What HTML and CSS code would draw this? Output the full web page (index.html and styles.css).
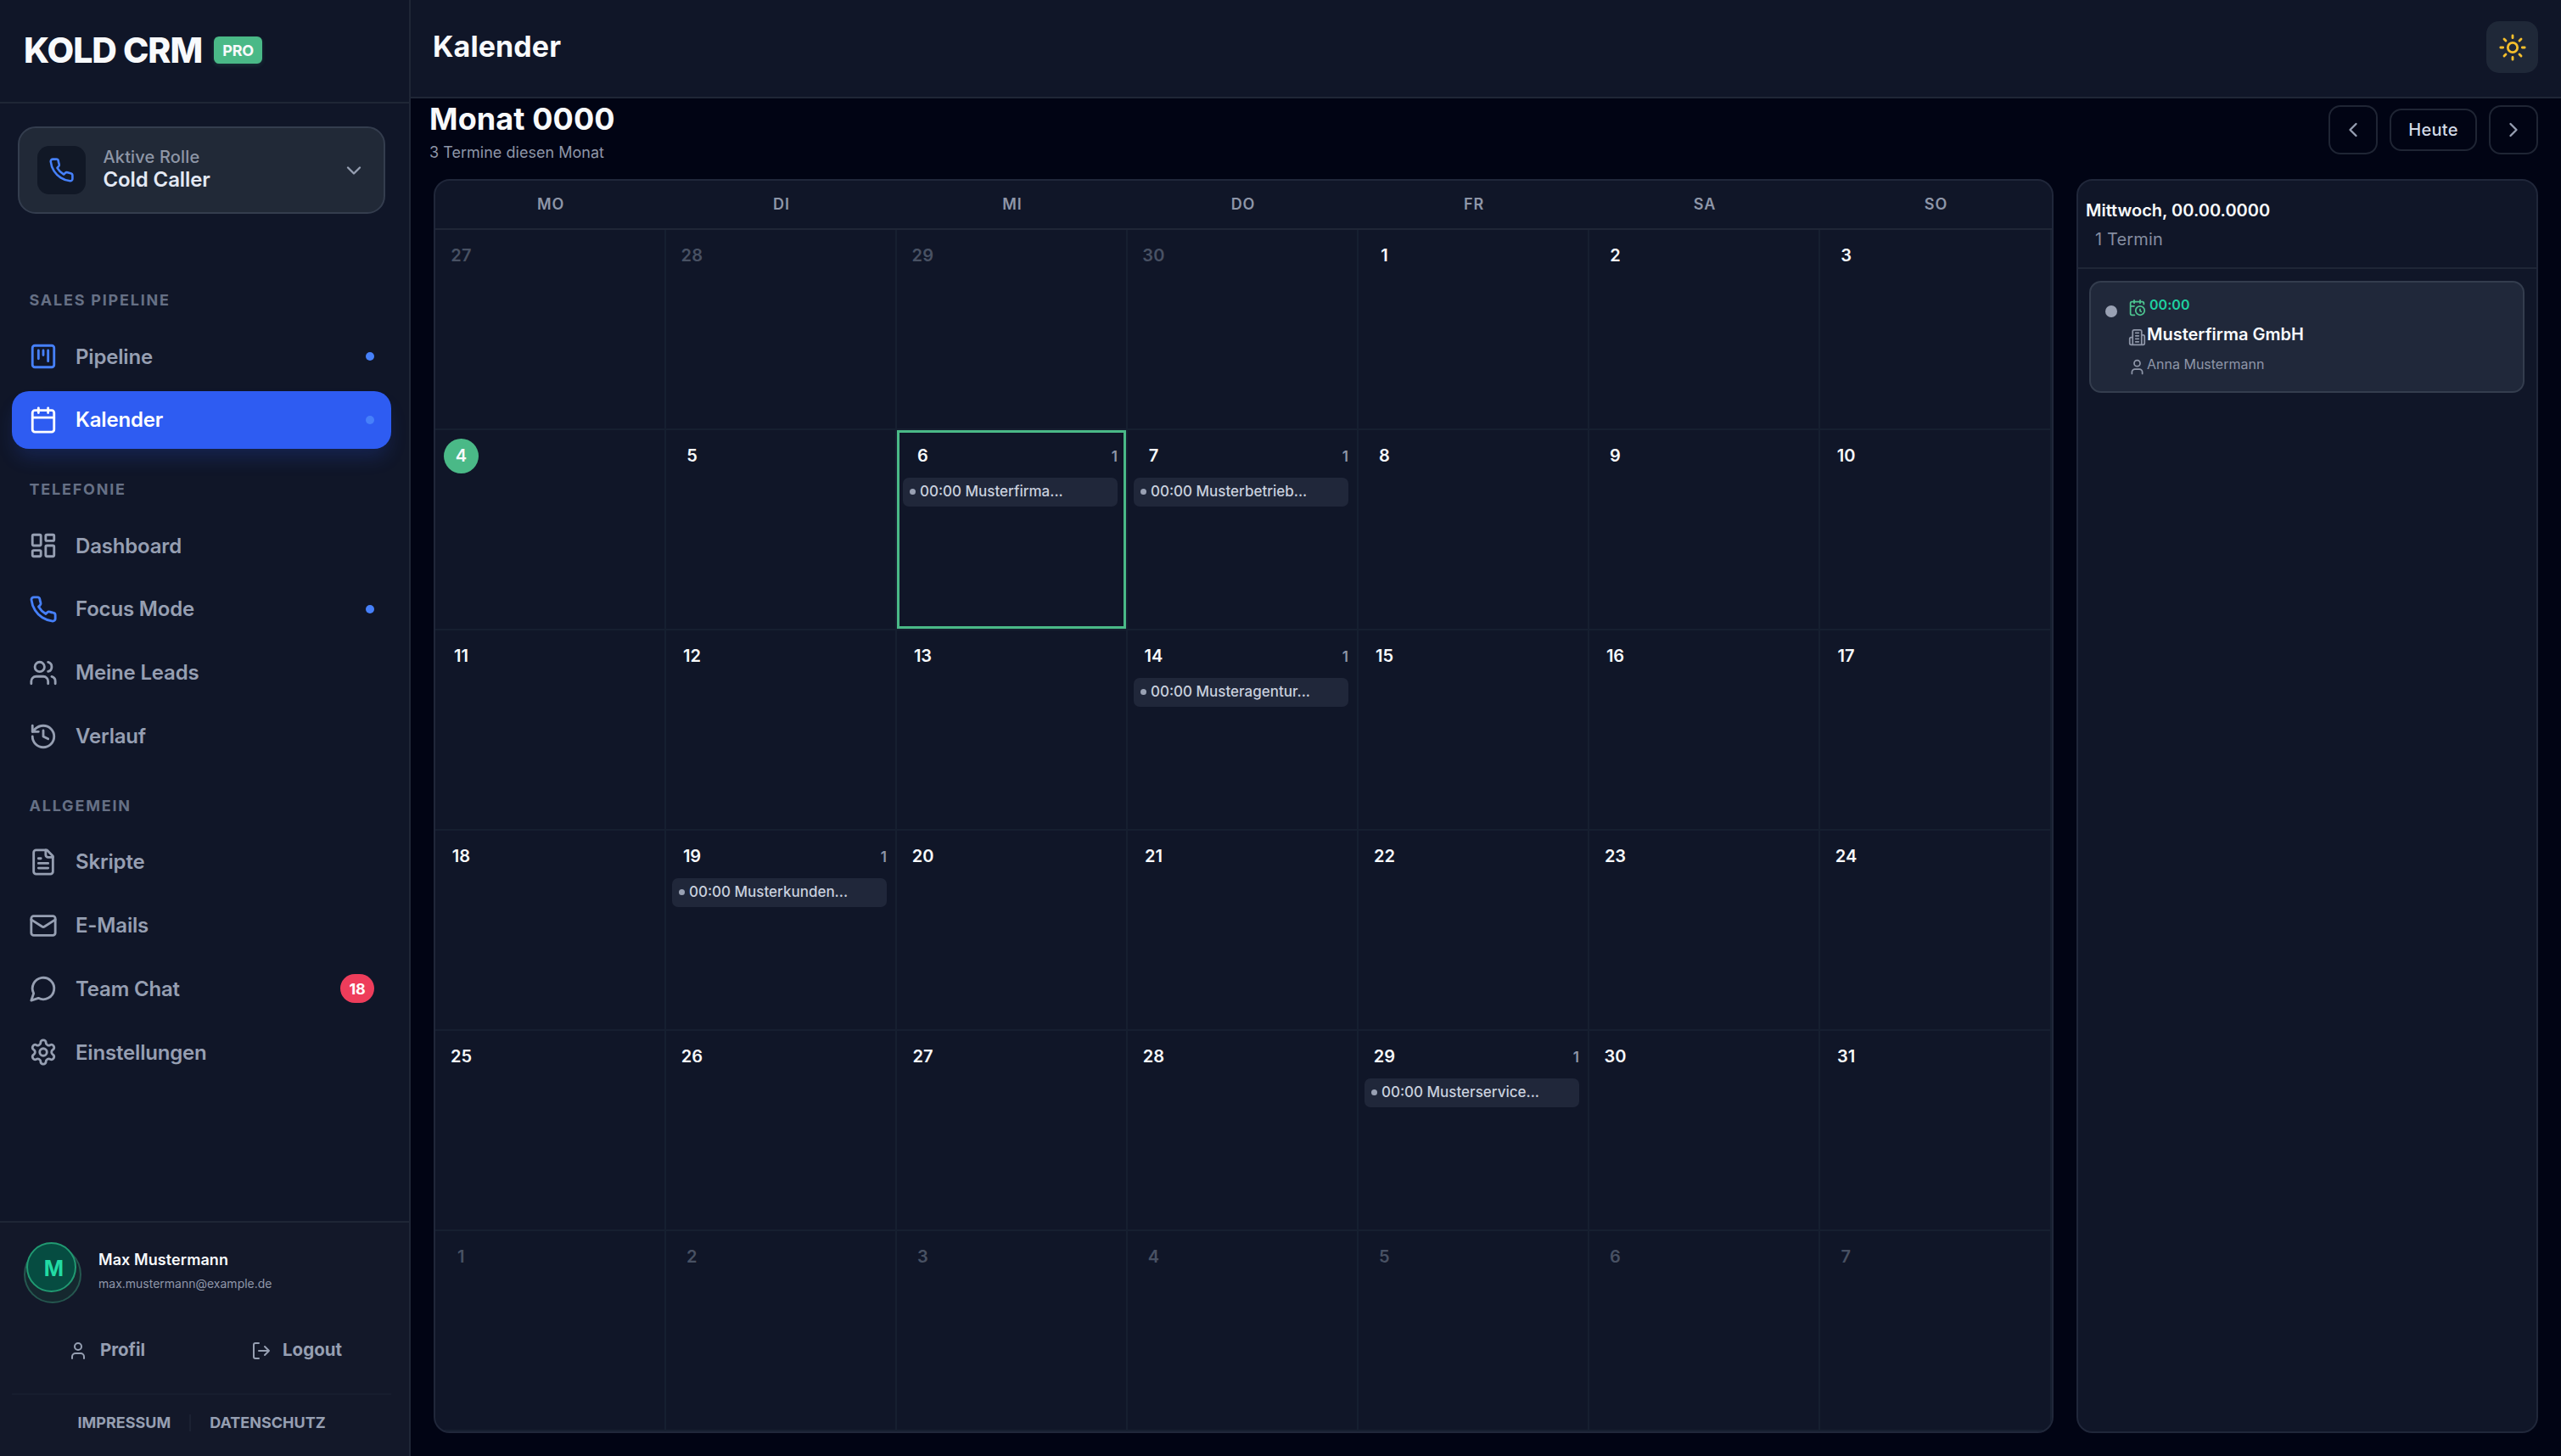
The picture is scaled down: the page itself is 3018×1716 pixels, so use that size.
FILE: index.html
```html
<!DOCTYPE html>
<html lang="de">
<head>
<meta charset="utf-8">
<title>Kalender – KOLD CRM</title>
<link rel="stylesheet" href="styles.css">
</head>
<body>
<svg class="sprite" aria-hidden="true">
  <symbol id="phone" viewBox="0 0 24 24"><path d="M22 16.92v3a2 2 0 0 1-2.18 2 19.79 19.79 0 0 1-8.63-3.07 19.5 19.5 0 0 1-6-6 19.79 19.79 0 0 1-3.07-8.67A2 2 0 0 1 4.11 2h3a2 2 0 0 1 2 1.72 12.84 12.84 0 0 0 .7 2.81 2 2 0 0 1-.45 2.11L8.09 9.91a16 16 0 0 0 6 6l1.27-1.27a2 2 0 0 1 2.11-.45 12.84 12.84 0 0 0 2.81.7A2 2 0 0 1 22 16.92z"/></symbol>
  <symbol id="chevron-down" viewBox="0 0 24 24"><path d="m6 9 6 6 6-6"/></symbol>
  <symbol id="chevron-left" viewBox="0 0 24 24"><path d="m15 18-6-6 6-6"/></symbol>
  <symbol id="chevron-right" viewBox="0 0 24 24"><path d="m9 18 6-6-6-6"/></symbol>
  <symbol id="kanban" viewBox="0 0 24 24"><rect x="3" y="3" width="18" height="18" rx="2"/><path d="M8 7v7M12 7v4M16 7v9"/></symbol>
  <symbol id="calendar" viewBox="0 0 24 24"><path d="M8 2v4M16 2v4M3 10h18"/><rect x="3" y="4" width="18" height="18" rx="2"/></symbol>
  <symbol id="dashboard" viewBox="0 0 24 24"><rect x="3" y="3" width="7" height="9" rx="1"/><rect x="14" y="3" width="7" height="5" rx="1"/><rect x="14" y="12" width="7" height="9" rx="1"/><rect x="3" y="16" width="7" height="5" rx="1"/></symbol>
  <symbol id="users" viewBox="0 0 24 24"><path d="M16 21v-2a4 4 0 0 0-4-4H6a4 4 0 0 0-4 4v2"/><circle cx="9" cy="7" r="4"/><path d="M22 21v-2a4 4 0 0 0-3-3.87M16 3.13a4 4 0 0 1 0 7.75"/></symbol>
  <symbol id="history" viewBox="0 0 24 24"><path d="M3 12a9 9 0 1 0 9-9 9.75 9.75 0 0 0-6.74 2.74L3 8"/><path d="M3 3v5h5M12 7v5l4 2"/></symbol>
  <symbol id="file" viewBox="0 0 24 24"><path d="M15 2H6a2 2 0 0 0-2 2v16a2 2 0 0 0 2 2h12a2 2 0 0 0 2-2V7Z"/><path d="M14 2v4a2 2 0 0 0 2 2h4M10 9H8M16 13H8M16 17H8"/></symbol>
  <symbol id="mail" viewBox="0 0 24 24"><rect x="2" y="4" width="20" height="16" rx="2"/><path d="m22 7-8.97 5.7a1.94 1.94 0 0 1-2.06 0L2 7"/></symbol>
  <symbol id="chat" viewBox="0 0 24 24"><path d="M7.9 20A9 9 0 1 0 4 16.1L2 22Z"/></symbol>
  <symbol id="settings" viewBox="0 0 24 24"><path d="M12.22 2h-.44a2 2 0 0 0-2 2v.18a2 2 0 0 1-1 1.73l-.43.25a2 2 0 0 1-2 0l-.15-.08a2 2 0 0 0-2.73.73l-.22.38a2 2 0 0 0 .73 2.73l.15.1a2 2 0 0 1 1 1.72v.51a2 2 0 0 1-1 1.74l-.15.09a2 2 0 0 0-.73 2.73l.22.38a2 2 0 0 0 2.73.73l.15-.08a2 2 0 0 1 2 0l.43.25a2 2 0 0 1 1 1.73V20a2 2 0 0 0 2 2h.44a2 2 0 0 0 2-2v-.18a2 2 0 0 1 1-1.73l.43-.25a2 2 0 0 1 2 0l.15.08a2 2 0 0 0 2.73-.73l.22-.39a2 2 0 0 0-.73-2.73l-.15-.08a2 2 0 0 1-1-1.74v-.5a2 2 0 0 1 1-1.74l.15-.09a2 2 0 0 0 .73-2.73l-.22-.38a2 2 0 0 0-2.73-.73l-.15.08a2 2 0 0 1-2 0l-.43-.25a2 2 0 0 1-1-1.73V4a2 2 0 0 0-2-2z"/><circle cx="12" cy="12" r="3"/></symbol>
  <symbol id="user" viewBox="0 0 24 24"><path d="M19 21v-2a4 4 0 0 0-4-4H9a4 4 0 0 0-4 4v2"/><circle cx="12" cy="7" r="4"/></symbol>
  <symbol id="logout" viewBox="0 0 24 24"><path d="M9 21H5a2 2 0 0 1-2-2V5a2 2 0 0 1 2-2h4M16 17l5-5-5-5M21 12H9"/></symbol>
  <symbol id="sun" viewBox="0 0 24 24"><circle cx="12" cy="12" r="4"/><path d="M12 2v2M12 20v2M4.93 4.93l1.41 1.41M17.66 17.66l1.41 1.41M2 12h2M20 12h2M6.34 17.66l-1.41 1.41M19.07 4.93l-1.41 1.41"/></symbol>
  <symbol id="calendar-clock" viewBox="0 0 24 24"><path d="M21 7.5V6a2 2 0 0 0-2-2H5a2 2 0 0 0-2 2v14a2 2 0 0 0 2 2h3.5M16 2v4M8 2v4M3 10h5M17.5 17.5 16 16.3V14"/><circle cx="16" cy="16" r="6"/></symbol>
  <symbol id="building" viewBox="0 0 24 24"><path d="M6 22V4a2 2 0 0 1 2-2h8a2 2 0 0 1 2 2v18ZM6 12H4a2 2 0 0 0-2 2v6a2 2 0 0 0 2 2h2M18 9h2a2 2 0 0 1 2 2v9a2 2 0 0 1-2 2h-2M10 6h4M10 10h4M10 14h4M10 18h4"/></symbol>
</svg>

<div class="app">
  <aside class="sidebar">
    <div class="brand"><span class="brand-name">KOLD CRM</span><span class="brand-badge">PRO</span></div>

    <button class="role">
      <span class="role-icon"><svg class="icon"><use href="#phone"/></svg></span>
      <span class="role-text"><span class="role-label">Aktive Rolle</span><span class="role-name">Cold Caller</span></span>
      <svg class="icon role-chevron"><use href="#chevron-down"/></svg>
    </button>

    <nav class="nav">
      <h2 class="nav-heading">SALES PIPELINE</h2>
      <a class="nav-item blue"><svg class="icon"><use href="#kanban"/></svg><span>Pipeline</span><i class="dot"></i></a>
      <a class="nav-item active"><svg class="icon"><use href="#calendar"/></svg><span>Kalender</span><i class="dot"></i></a>
      <h2 class="nav-heading">TELEFONIE</h2>
      <a class="nav-item"><svg class="icon"><use href="#dashboard"/></svg><span>Dashboard</span></a>
      <a class="nav-item blue"><svg class="icon"><use href="#phone"/></svg><span>Focus Mode</span><i class="dot"></i></a>
      <a class="nav-item"><svg class="icon"><use href="#users"/></svg><span>Meine Leads</span></a>
      <a class="nav-item"><svg class="icon"><use href="#history"/></svg><span>Verlauf</span></a>
      <h2 class="nav-heading">ALLGEMEIN</h2>
      <a class="nav-item"><svg class="icon"><use href="#file"/></svg><span>Skripte</span></a>
      <a class="nav-item"><svg class="icon"><use href="#mail"/></svg><span>E-Mails</span></a>
      <a class="nav-item"><svg class="icon"><use href="#chat"/></svg><span>Team Chat</span><b class="badge">18</b></a>
      <a class="nav-item"><svg class="icon"><use href="#settings"/></svg><span>Einstellungen</span></a>
    </nav>

    <footer class="account">
      <div class="account-user">
        <div class="avatar"><span class="avatar-ring"></span><span class="avatar-face">M</span></div>
        <div class="account-text"><span class="account-name">Max Mustermann</span><span class="account-mail">max.mustermann@example.de</span></div>
      </div>
      <div class="account-actions">
        <a class="account-action"><svg class="icon"><use href="#user"/></svg>Profil</a>
        <a class="account-action"><svg class="icon"><use href="#logout"/></svg>Logout</a>
      </div>
      <div class="legal"><a>IMPRESSUM</a><i class="legal-sep"></i><a>DATENSCHUTZ</a></div>
    </footer>
  </aside>

  <main class="main">
    <header class="topbar"><h1 class="topbar-title">Kalender</h1><button class="theme"><svg class="icon"><use href="#sun"/></svg></button></header>

    <div class="toolbar">
      <div><h2 class="month">Monat 0000</h2><p class="month-info">3 Termine diesen Monat</p></div>
      <div class="pager">
        <button class="pager-arrow"><svg class="icon"><use href="#chevron-left"/></svg></button>
        <button class="pager-today">Heute</button>
        <button class="pager-arrow"><svg class="icon"><use href="#chevron-right"/></svg></button>
      </div>
    </div>

    <div class="content">
      <section class="calendar">
        <div class="weekdays"><span>MO</span><span>DI</span><span>MI</span><span>DO</span><span>FR</span><span>SA</span><span>SO</span></div>
        <div class="days">
          <div class="day out"><b class="num">27</b></div>
          <div class="day out"><b class="num">28</b></div>
          <div class="day out"><b class="num">29</b></div>
          <div class="day out"><b class="num">30</b></div>
          <div class="day"><b class="num">1</b></div>
          <div class="day"><b class="num">2</b></div>
          <div class="day"><b class="num">3</b></div>

          <div class="day today"><b class="num">4</b></div>
          <div class="day"><b class="num">5</b></div>
          <div class="day selected"><b class="num">6</b><span class="count">1</span><div class="event"><i></i>00:00 Musterfirma...</div></div>
          <div class="day"><b class="num">7</b><span class="count">1</span><div class="event"><i></i>00:00 Musterbetrieb...</div></div>
          <div class="day"><b class="num">8</b></div>
          <div class="day"><b class="num">9</b></div>
          <div class="day"><b class="num">10</b></div>

          <div class="day"><b class="num">11</b></div>
          <div class="day"><b class="num">12</b></div>
          <div class="day"><b class="num">13</b></div>
          <div class="day"><b class="num">14</b><span class="count">1</span><div class="event"><i></i>00:00 Musteragentur...</div></div>
          <div class="day"><b class="num">15</b></div>
          <div class="day"><b class="num">16</b></div>
          <div class="day"><b class="num">17</b></div>

          <div class="day"><b class="num">18</b></div>
          <div class="day"><b class="num">19</b><span class="count">1</span><div class="event"><i></i>00:00 Musterkunden...</div></div>
          <div class="day"><b class="num">20</b></div>
          <div class="day"><b class="num">21</b></div>
          <div class="day"><b class="num">22</b></div>
          <div class="day"><b class="num">23</b></div>
          <div class="day"><b class="num">24</b></div>

          <div class="day"><b class="num">25</b></div>
          <div class="day"><b class="num">26</b></div>
          <div class="day"><b class="num">27</b></div>
          <div class="day"><b class="num">28</b></div>
          <div class="day"><b class="num">29</b><span class="count">1</span><div class="event"><i></i>00:00 Musterservice...</div></div>
          <div class="day"><b class="num">30</b></div>
          <div class="day"><b class="num">31</b></div>

          <div class="day out"><b class="num">1</b></div>
          <div class="day out"><b class="num">2</b></div>
          <div class="day out"><b class="num">3</b></div>
          <div class="day out"><b class="num">4</b></div>
          <div class="day out"><b class="num">5</b></div>
          <div class="day out"><b class="num">6</b></div>
          <div class="day out"><b class="num">7</b></div>
        </div>
      </section>

      <section class="agenda">
        <div class="agenda-head"><h3 class="agenda-date">Mittwoch, 00.00.0000</h3><p class="agenda-count">1 Termin</p></div>
        <div class="appointment">
          <i class="appointment-dot"></i>
          <div class="appointment-rows">
            <div class="appointment-time"><svg class="icon"><use href="#calendar-clock"/></svg>00:00</div>
            <div class="appointment-company"><svg class="icon"><use href="#building"/></svg>Musterfirma GmbH</div>
            <div class="appointment-person"><svg class="icon"><use href="#user"/></svg>Anna Mustermann</div>
          </div>
        </div>
      </section>
    </div>
  </main>
</div>
</body>
</html>
```
FILE: styles.css
```css
:root {
  --page: #010414;
  --panel: #101628;
  --line: #1f2636;
  --grid: #161f30;
  --muted: #969fb2;
  --blue: #4680fa;
  --green: #4ab987;
}

* { box-sizing: border-box; margin: 0; padding: 0; }

body {
  background: var(--page);
  color: #f8fafc;
  font-family: Inter, "Liberation Sans", sans-serif;
}

button { background: none; border: 0; color: inherit; font: inherit; }

.sprite { display: none; }

.icon {
  flex: none;
  width: 34px;
  height: 34px;
  fill: none;
  stroke: currentColor;
  stroke-width: 2;
  stroke-linecap: round;
  stroke-linejoin: round;
}

.app { display: flex; width: 3018px; height: 1716px; overflow: hidden; }

/* Sidebar */
.sidebar {
  display: flex;
  flex-direction: column;
  flex: none;
  width: 484px;
  background: var(--panel);
  border-right: 2px solid var(--line);
}

.brand {
  display: flex;
  align-items: center;
  gap: 14px;
  height: 122px;
  padding: 0 28px 2px;
  border-bottom: 2px solid var(--line);
}
.brand-name { font-size: 41px; font-weight: 800; letter-spacing: -1.02px; line-height: 50px; }
.brand-badge {
  width: 57px;
  height: 32px;
  border-radius: 6px;
  background: var(--green);
  box-shadow: 0 2px 5px rgba(74, 185, 135, .18);
  font-size: 18px;
  font-weight: 700;
  letter-spacing: -.2px;
  line-height: 33px;
  text-align: center;
}

.role {
  display: flex;
  align-items: center;
  flex: none;
  width: 433px;
  height: 103px;
  margin: 27px 0 0 21px;
  padding: 0 21px;
  border: 2px solid #343d4e;
  border-radius: 21px;
  background: #212937;
  text-align: left;
}
.role-icon {
  display: grid;
  place-items: center;
  width: 57px;
  height: 57px;
  margin-right: 20.5px;
  border-radius: 14px;
  background: #111826;
  color: var(--blue);
}
.role-icon .icon { width: 31px; height: 31px; }
.role-text { display: flex; flex-direction: column; flex: 1; padding-bottom: 4px; }
.role-label { color: #8e96a6; font-size: 20px; font-weight: 500; letter-spacing: .15px; line-height: 26px; }
.role-name { color: #e4e9f4; font-size: 24px; font-weight: 600; letter-spacing: -.1px; line-height: 27px; }
.role-chevron { width: 28px; height: 28px; color: var(--muted); }

.nav {
  display: flex;
  flex-direction: column;
  flex: 1;
  gap: 6.8px;
  padding: 90px 21px 0 14px;
}
.nav-heading {
  margin: 29.2px 0 13.4px 20.5px;
  color: #667085;
  font-size: 18px;
  font-weight: 700;
  letter-spacing: 1.78px;
  line-height: 24px;
}
.nav-heading:first-child { margin-top: 0; }
.nav-item {
  display: flex;
  align-items: center;
  gap: 21px;
  height: 68px;
  padding: 0 20px;
  border-radius: 20px;
  color: var(--muted);
  font-size: 24px;
  font-weight: 600;
  letter-spacing: -.18px;
}
.nav-item span { flex: 1; }
.nav-item.blue .icon { color: var(--blue); }
.nav-item.active {
  background: #2e5cf2;
  box-shadow: 0 14px 22px -4px rgba(46, 92, 242, .2);
  color: #fff;
}
.dot { width: 10px; height: 10px; border-radius: 50%; background: var(--blue); }
.badge {
  width: 40px;
  height: 34px;
  border-radius: 17px;
  background: #ee3d5b;
  color: #fff;
  font-size: 18px;
  font-weight: 700;
  line-height: 35px;
  text-align: center;
}

.account {
  flex: none;
  height: 277px;
  padding: 23px 21px 0 14px;
  border-top: 2px solid var(--line);
  background: #131829;
}
.account-user { display: flex; gap: 20px; padding-left: 14px; }
.avatar { display: grid; width: 68px; height: 72px; }
.avatar-ring, .avatar-face { grid-area: 1 / 1; border: 2px solid #25574f; border-radius: 50%; }
.avatar-ring { width: 68px; height: 68px; margin-top: 4px; background: #15282f; }
.avatar-face {
  width: 59px;
  height: 59px;
  margin-left: 3px;
  padding-left: 6px;
  border-color: #219a72;
  background: #064c41;
  color: #22dba4;
  font-size: 25px;
  font-weight: 700;
  line-height: 59px;
  text-align: center;
}
.account-text { display: flex; flex-direction: column; padding-top: 7px; }
.account-name { font-size: 18px; font-weight: 600; letter-spacing: .08px; line-height: 27px; }
.account-mail { color: #8f97a9; font-size: 14px; line-height: 30px; }
.account-actions { display: grid; grid-template-columns: 1fr 1fr; margin-top: 34.5px; }
.account-action {
  display: flex;
  align-items: center;
  justify-content: center;
  gap: 13.5px;
  height: 40px;
  color: var(--muted);
  font-size: 20.5px;
  font-weight: 700;
}
.account-action .icon { width: 24px; height: 24px; margin-top: 2px; }
.legal {
  display: flex;
  align-items: center;
  justify-content: center;
  gap: 22px;
  margin-top: 31.5px;
  padding-top: 13px;
  border-top: 2px solid #171d2e;
  color: var(--muted);
  font-size: 18px;
  font-weight: 700;
  line-height: 40px;
}
.legal-sep { width: 2px; height: 20px; background: #1b2132; }

/* Main area */
.main { display: flex; flex-direction: column; flex: 1; min-width: 0; }

.topbar {
  display: flex;
  align-items: center;
  justify-content: space-between;
  height: 116px;
  padding: 0 27px 3px 26px;
  border-bottom: 2px solid var(--line);
  background: var(--panel);
}
.topbar-title { padding-bottom: 2px; font-size: 34px; font-weight: 700; letter-spacing: .1px; line-height: 42px; }
.theme {
  display: grid;
  place-items: center;
  width: 61px;
  height: 61px;
  border-radius: 15px;
  background: #1f2838;
  color: #f5bf2c;
}

.toolbar { display: flex; justify-content: space-between; height: 95px; padding: 0 27px 0 22px; }
.month { padding-top: 1.5px; font-size: 36px; font-weight: 700; letter-spacing: .1px; line-height: 44px; }
.month-info { margin-top: 6px; color: #8e96a8; font-size: 18px; letter-spacing: .02px; line-height: 24px; }
.pager { display: flex; align-items: center; align-self: flex-start; gap: 14px; padding-top: 8px; }
.pager-arrow, .pager-today { border: 2px solid #1f2534; border-radius: 14px; }
.pager-arrow { display: grid; place-items: center; width: 58px; height: 58px; color: var(--muted); }
.pager-arrow .icon { width: 28px; height: 28px; }
.pager-today { width: 103px; height: 50px; color: #d3d9e6; font-size: 20px; font-weight: 500; letter-spacing: .3px; }

.content { display: grid; grid-template-columns: 1909px 544px; gap: 27px; height: 1478px; padding-left: 27px; }

.calendar, .agenda {
  overflow: hidden;
  border: 2px solid #20273a;
  border-radius: 19px;
  background: var(--panel);
}
.calendar { display: flex; flex-direction: column; }
.weekdays {
  display: grid;
  grid-template-columns: repeat(6, 272px) 1fr;
  height: 58px;
  border-bottom: 2px solid var(--line);
  color: #8e96a8;
  font-size: 18px;
  font-weight: 600;
  letter-spacing: .9px;
  line-height: 56px;
  text-align: center;
}
.days { display: grid; grid-template: repeat(6, 236px) / repeat(6, 272px) 1fr; }
.day {
  display: grid;
  grid-template: 41px 39px / 44px 1fr;
  align-content: start;
  padding: 10px 10px 0 7px;
  border: solid var(--grid);
  border-width: 0 2px 2px 0;
}
.num {
  margin-left: 3px;
  width: 41px;
  border-radius: 50%;
  font-size: 20px;
  font-weight: 600;
  line-height: 41px;
  text-align: center;
}
.out .num { color: #485163; letter-spacing: .3px; }
.today .num { background: var(--green); }
.selected { box-shadow: inset 0 0 0 3px var(--green); }
.count { color: #8e96a8; font-size: 17px; font-weight: 600; line-height: 42px; text-align: right; }
.event {
  grid-column: 1 / 3;
  display: flex;
  align-items: center;
  gap: 5px;
  height: 34px;
  margin-top: 5px;
  padding: 0 0 2px 8px;
  border-radius: 7px;
  background: #20273a;
  color: #c9d0de;
  font-size: 17px;
  font-weight: 500;
}
.event i { width: 7px; height: 7px; border-radius: 50%; background: #99a1b3; }

.agenda-head { height: 104px; padding-top: 20px; border-bottom: 2px solid var(--line); }
.agenda-date { padding-left: 9px; font-size: 20px; font-weight: 600; line-height: 31px; }
.agenda-count { padding: 4px 0 0 20px; color: #858da0; font-size: 20px; letter-spacing: .15px; line-height: 29px; }
.appointment {
  display: flex;
  gap: 12.5px;
  height: 132px;
  margin: 14px 14px 0 13px;
  padding: 8px 17px 0;
  border: 2px solid #343d4e;
  border-radius: 14px;
  background: #20283a;
}
.appointment-dot { width: 14px; height: 14px; margin-top: 19px; border-radius: 50%; background: #99a1b3; }
.appointment-rows { display: grid; grid-auto-rows: 35px; }
.appointment-rows > div { display: flex; align-items: center; gap: 1.5px; }
.appointment-rows .icon { width: 21px; height: 21px; margin-top: 8px; color: #8e96a8; }
.appointment-rows .appointment-time { gap: 4.5px; color: #1fd0a0; font-size: 16px; font-weight: 600; letter-spacing: .05px; }
.appointment-rows .appointment-time .icon { color: #4dc490; }
.appointment-company { font-size: 20px; font-weight: 600; }
.appointment-person { color: #8e96a8; font-size: 16px; }
```
